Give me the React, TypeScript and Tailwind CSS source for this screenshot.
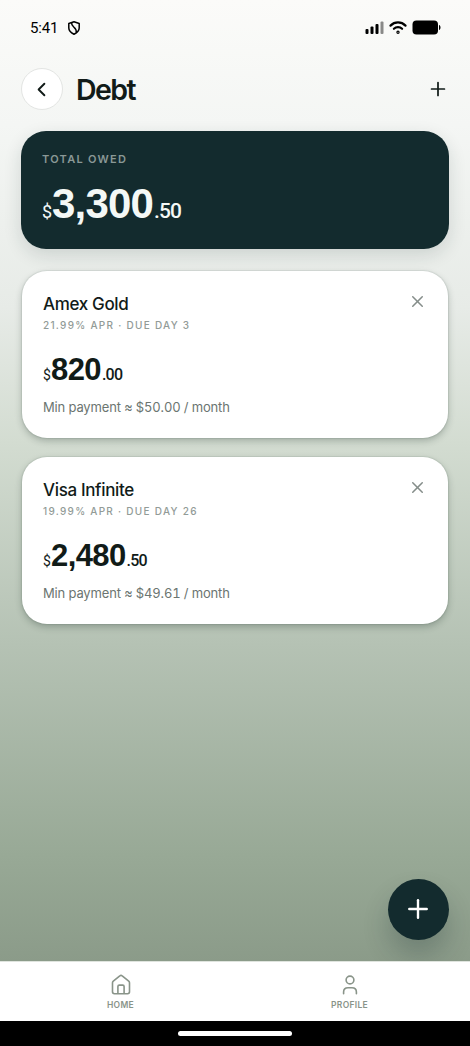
import { ChevronLeft, Plus, X } from "lucide-react";

type Debt = {
  name: string;
  apr: string;
  dueDay: number;
  dollars: string;
  cents: string;
  minPayment: string;
};

const debts: Debt[] = [
  { name: "Amex Gold", apr: "21.99", dueDay: 3, dollars: "820", cents: "00", minPayment: "50.00" },
  { name: "Visa Infinite", apr: "19.99", dueDay: 26, dollars: "2,480", cents: "50", minPayment: "49.61" },
];

function StatusBar() {
  return (
    <div className="flex h-[56px] items-center justify-between pl-[30px] pr-[29px] text-black">
      <div className="flex items-center gap-[11px]">
        <span className="font-[Roboto,sans-serif] text-[15px] leading-[20px] tracking-[-0.2px]">5:41</span>
        <svg className="-ml-px h-[14px] w-[12px]" viewBox="0 0 12 14" fill="none" stroke="currentColor" strokeWidth="1.5">
          <path d="M6 0.8 11.2 2.5V7c0 2.8-2 4.7-5.2 6.2C2.800 11.700 0.800 9.800 0.800 7V2.500Z" strokeLinejoin="round" />
          <path d="M3.600 1.700C3 6.500 8.800 5.500 8.300 11.500" />
        </svg>
      </div>
      <div className="flex items-center gap-[5px]">
        <svg className="-mt-px h-[13px] w-[19px]" viewBox="0 0 19 13" fill="currentColor">
          <rect x="0.500" y="8" width="3" height="5" rx="1" />
          <rect x="5.500" y="5.500" width="3" height="7.500" rx="1" />
          <rect x="10.500" y="3" width="3" height="10" rx="1" />
          <rect x="15.500" y="0.500" width="3" height="12.500" rx="1" opacity="0.45" />
        </svg>
        <svg className="-mt-px h-[13px] w-[18px]" viewBox="0 0 18 13" fill="none" stroke="currentColor" strokeWidth="2.2" strokeLinecap="round">
          <path d="M1.500 4.600C5.700 0.400 12.300 0.400 16.500 4.600" />
          <path d="M4.900 7.800C7.200 5.600 10.800 5.600 13.100 7.800" />
          <circle cx="9" cy="11.200" r="0.600" />
        </svg>
        <svg className="-mt-px h-[15px] w-[29px]" viewBox="0 0 29 15" fill="currentColor">
          <rect x="0.500" y="0.500" width="25.500" height="14" rx="4" />
          <path d="M27 5c2 0.500 2 4.500 0 5Z" />
        </svg>
      </div>
    </div>
  );
}

function Header() {
  return (
    <header className="mt-[13px] flex h-[41px] items-center">
      <button
        type="button"
        aria-label="Back"
        className="-mt-px flex size-[42px] items-center justify-center rounded-full border border-[#e3e5e3] bg-white pr-px text-[#111b18]"
      >
        <ChevronLeft className="size-[23px]" strokeWidth={2} />
      </button>
      <h1 className="ml-[13px] text-[28.5px] font-semibold leading-[40px] tracking-[-1.6px] text-[#111b18]">Debt</h1>
      <button type="button" aria-label="Add debt" className="-mt-px ml-auto text-[#111b18]">
        <Plus className="size-[22px]" strokeWidth={1.9} />
      </button>
    </header>
  );
}

function TotalCard() {
  return (
    <section className="mt-[21px] h-[118px] rounded-[25px] bg-[#132b2e] px-[21px] pt-[21px] shadow-[0_6px_18px_rgba(19,43,46,0.14)]">
      <p className="text-[11px] font-semibold leading-[15px] tracking-[1.28px] text-[#8a9896]">TOTAL OWED</p>
      <p className="mt-[10px] flex items-baseline whitespace-nowrap leading-[54px] text-[#f4f8f6]">
        <span className="w-[10px] font-[Roboto,sans-serif] text-[18px]">$</span>
        <span className="font-['Liberation_Sans',sans-serif] text-[42px] font-bold tracking-[-0.8px]">3,300</span>
        <span className="ml-[1px] font-[Roboto,sans-serif] text-[21px] font-medium tracking-[-1px]">.50</span>
      </p>
    </section>
  );
}

function DebtCard({ debt }: { debt: Debt }) {
  return (
    <article className="mx-px flex h-[167px] justify-between rounded-[25px] bg-white pl-[21px] pr-[21px] pt-[22px] shadow-[0_0_1px_1px_rgba(20,40,30,0.07),0_3px_7px_rgba(20,40,30,0.26)]">
      <div className="whitespace-nowrap">
        <h2 className="text-[17px] font-medium leading-[22px] tracking-[-0.35px] text-[#111b18]">{debt.name}</h2>
        <p className="mt-[3px] text-[10px] font-medium leading-[14px] tracking-[1.28px] text-[#929b97]">
          {debt.apr}% APR · DUE DAY {debt.dueDay}
        </p>
        <p className="mt-[18px] flex h-[41px] items-baseline leading-[40px] text-[#111b18]">
          <span className="w-[8px] font-[Roboto,sans-serif] text-[14px]">$</span>
          <span className="font-['Liberation_Sans',sans-serif] text-[31px] font-bold tracking-[-0.6px]">{debt.dollars}</span>
          <span className="ml-[1px] font-[Roboto,sans-serif] text-[16px] font-medium tracking-[-0.8px]">.{debt.cents}</span>
        </p>
        <p className="mt-[6px] text-[13px] tabular-nums leading-[20px] tracking-[-0.15px] text-[#6b7571]">
          Min payment ≈ ${debt.minPayment} / month
        </p>
      </div>
      <button type="button" aria-label={`Remove ${debt.name}`} className="-mt-px h-[18px] text-[#858d8a]">
        <X className="size-[19px]" strokeWidth={1.9} />
      </button>
    </article>
  );
}

function BottomNav() {
  return (
    <nav className="grid h-[60px] grid-cols-2 border-t border-[#dfe4de] bg-white px-[6px] text-[#899489]">
      <div className="flex flex-col items-center pt-[12px]">
        <svg className="size-[22px]" viewBox="0 0 22 22" fill="none" stroke="currentColor" strokeWidth="1.6" strokeLinejoin="round">
          <path d="M2.500 8.800c0-.7.300-1.200.8-1.600l6.500-5.300c.7-.6 1.700-.6 2.400 0l6.500 5.300c.5.400.8.900.8 1.600v9c0 1.100-.8 1.900-1.900 1.900H4.400c-1.100 0-1.900-.8-1.900-1.900Z" />
          <path d="M7.900 19.700v-7.200c0-.8.600-1.400 1.400-1.400h3.400c.8 0 1.400.600 1.400 1.400v7.200" />
        </svg>
        <span className="mt-[3px] text-[8.5px] font-semibold leading-[12px] tracking-[0.3px]">HOME</span>
      </div>
      <div className="flex flex-col items-center pt-[12px]">
        <svg className="size-[22px]" viewBox="0 0 22 22" fill="none" stroke="currentColor" strokeWidth="1.6" strokeLinecap="round">
          <circle cx="11" cy="6" r="3.900" />
          <path d="M4.600 19.700v-1.700c0-2.700 1.700-4.300 4.400-4.300h4c2.700 0 4.400 1.600 4.400 4.300v1.700" />
        </svg>
        <span className="mt-[3px] text-[8.5px] font-semibold leading-[12px] tracking-[0.3px]">PROFILE</span>
      </div>
    </nav>
  );
}

export default function App() {
  return (
    <div className="flex h-[1046px] w-[470px] flex-col overflow-hidden bg-white font-[Inter,sans-serif]">
      <div className="relative h-[961px] overflow-hidden bg-[linear-gradient(180deg,#fbfbf9_0%,#f4f6f4_13%,#e7ebe7_32%,#d3dcd1_46%,#b5c2b4_67%,#98a996_89%,#8b9b89_100%)]">
        <StatusBar />
        <main className="px-[21px]">
          <Header />
          <TotalCard />
          <div className="mt-[22px] flex flex-col gap-[19px]">
            {debts.map((debt) => (
              <DebtCard key={debt.name} debt={debt} />
            ))}
          </div>
        </main>
        <button
          type="button"
          aria-label="Add"
          className="absolute bottom-[21px] right-[21px] flex size-[61px] items-center justify-center rounded-full bg-[#132b2e] pb-px pr-px text-white shadow-[0_16px_26px_rgba(19,43,46,0.24)]"
        >
          <Plus className="size-[30px]" strokeWidth={1.9} />
        </button>
      </div>
      <BottomNav />
      <div className="flex h-[25px] justify-center bg-black pt-[10px]">
        <div className="h-[5px] w-[114px] rounded-full bg-white" />
      </div>
    </div>
  );
}
